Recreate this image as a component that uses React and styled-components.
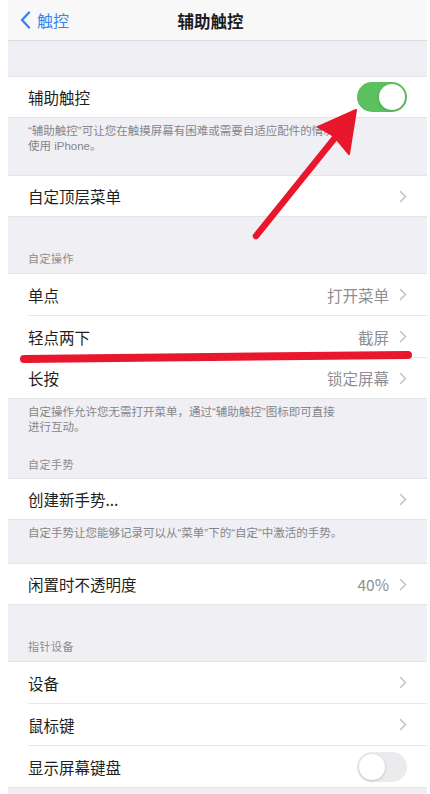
import React from "react";
import styled, { createGlobalStyle } from "styled-components";

const GlobalStyle = createGlobalStyle`
  html, body {
    margin: 0;
    padding: 0;
    background: #ffffff;
    font-family: "Noto Sans CJK SC", "Noto Sans", sans-serif;
  }
`;

const Page = styled.div`
  position: relative;
  width: 430px;
  height: 794px;
  overflow: hidden;
  background: #ffffff;
`;

const Screen = styled.div`
  margin-left: 8px;
  width: 419px;
  min-height: 794px;
  background: #efeff4;
  display: flex;
  flex-direction: column;
`;

const NavBar = styled.div`
  height: 40px;
  background: #f8f8f9;
  border-bottom: 1px solid #dcdce0;
  display: grid;
  grid-template-columns: 1fr auto 1fr;
  align-items: center;
  padding: 0 12px;
`;

const Back = styled.div`
  display: flex;
  align-items: center;
  gap: 6px;
  color: #3a82f0;
  font-size: 16px;
`;

const Title = styled.div`
  font-size: 16.5px;
  font-weight: 600;
  color: #1c1c1e;
  margin-right: 14px;
  margin-top: 1px;
`;

const Gap = styled.div`
  height: ${(p) => p.h}px;
  display: flex;
  align-items: flex-end;
  padding: 0 20px ${(p) => (p.pb ? p.pb : 0)}px;
  box-sizing: border-box;
  font-size: 11px;
  color: #8c8c90;
  letter-spacing: 0.5px;
`;

const Note = styled.div`
  height: ${(p) => p.h}px;
  box-sizing: border-box;
  padding: 6px 20px 0 20px;
  font-family: "Liberation Sans", "Noto Sans CJK SC", sans-serif;
  font-size: 11.5px;
  line-height: 15px;
  color: #86868a;
  white-space: nowrap;
`;

const Group = styled.div`
  background: #ffffff;
  border-top: 1px solid #e4e4e8;
  border-bottom: 1px solid #e4e4e8;
  padding-left: 20px;
`;

const Row = styled.div`
  height: ${(p) => p.h || 42}px;
  display: flex;
  align-items: center;
  padding-right: 20px;
  box-sizing: border-box;
  border-bottom: ${(p) => (p.last ? "none" : "1px solid #e8e8ec")};
`;

const Label = styled.div`
  flex: 1;
  font-size: 15.5px;
  color: #1f1f21;
`;

const Value = styled.div`
  font-size: 15.5px;
  color: #8e8e93;
  margin-right: 10px;
`;

const Toggle = styled.div`
  width: 50px;
  height: 30px;
  border-radius: 15px;
  box-sizing: border-box;
  background: ${(p) => (p.on ? "#5cc05f" : "#ebebed")};
  position: relative;
  &::after {
    content: "";
    position: absolute;
    top: 2px;
    left: ${(p) => (p.on ? "22px" : "2px")};
    width: 26px;
    height: 26px;
    border-radius: 50%;
    background: #ffffff;
    box-shadow: 0 1px 3px rgba(0, 0, 0, 0.18);
  }
`;

const Chevron = () => (
  <svg width="8" height="13" viewBox="0 0 8 13">
    <path d="M1.5 1.5 L6.5 6.5 L1.5 11.5" fill="none" stroke="#c4c4c8" strokeWidth="1.6" strokeLinecap="round" strokeLinejoin="round" />
  </svg>
);

const Overlay = styled.svg`
  position: absolute;
  left: 0;
  top: 0;
  pointer-events: none;
`;

const Item = ({ label, value, chevron = true, toggle, last, h }) => (
  <Row last={last} h={h}>
    <Label>{label}</Label>
    {value && <Value>{value}</Value>}
    {toggle !== undefined ? <Toggle on={toggle} /> : chevron && <Chevron />}
  </Row>
);

export default function App() {
  return (
    <Page>
      <GlobalStyle />
      <Screen>
        <NavBar>
          <Back>
            <svg width="11" height="18" viewBox="0 0 11 18">
              <path d="M9 1.5 L2 9 L9 16.5" fill="none" stroke="#3a82f0" strokeWidth="2.4" strokeLinecap="round" strokeLinejoin="round" />
            </svg>
            触控
          </Back>
          <Title>辅助触控</Title>
          <div />
        </NavBar>
        <Gap h={35} />
        <Group>
          <Item label="辅助触控" toggle={true} last h={40} />
        </Group>
        <Note h={57}>
          “辅助触控”可让您在触摸屏幕有困难或需要自适应配件的情况下
          <br />
          使用 iPhone。
        </Note>
        <Group>
          <Item label="自定顶层菜单" last h={40} />
        </Group>
        <Gap h={56} pb={7}>自定操作</Gap>
        <Group>
          <Item label="单点" value="打开菜单" />
          <Item label="轻点两下" value="截屏" />
          <Item label="长按" value="锁定屏幕" last h={40} />
        </Group>
        <Note h={50}>
          自定操作允许您无需打开菜单，通过“辅助触控”图标即可直接
          <br />
          进行互动。
        </Note>
        <Gap h={29} pb={6}>自定手势</Gap>
        <Group>
          <Item label="创建新手势..." last h={40} />
        </Group>
        <Note h={43}>自定手势让您能够记录可以从“菜单”下的“自定”中激活的手势。</Note>
        <Group>
          <Item label="闲置时不透明度" value="40%" last h={40} />
        </Group>
        <Gap h={56} pb={7}>指针设备</Gap>
        <Group>
          <Item label="设备" />
          <Item label="鼠标键" />
          <Item label="显示屏幕键盘" toggle={false} last h={41} />
        </Group>
      </Screen>
      <Overlay width="430" height="794" viewBox="0 0 430 794">
        <line x1="256" y1="236" x2="338" y2="134" stroke="#e8172b" strokeWidth="6.5" strokeLinecap="round" />
        <polygon points="356,110 318,127 334,136 349,154" fill="#e8172b" stroke="#e8172b" strokeWidth="2" strokeLinejoin="round" />
        <line x1="24" y1="359" x2="408" y2="355" stroke="#e8172b" strokeWidth="8" strokeLinecap="round" />
      </Overlay>
    </Page>
  );
}
